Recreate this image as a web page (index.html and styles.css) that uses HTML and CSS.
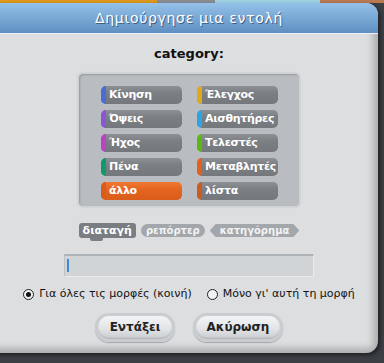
FILE: index.html
```html
<!DOCTYPE html>
<html lang="el">
<head>
    <meta charset="UTF-8">
    <meta name="viewport" content="width=device-width, initial-scale=1.0">
    <title>Δημιούργησε μια εντολή</title>
    <link rel="stylesheet" href="styles.css">
</head>
<body>
    <div class="dialog">
        <div class="title-bar">Δημιούργησε μια εντολή</div>
        <div class="dialog-body">
            <div class="label">category:</div>
            <div class="palette">
                <div class="cat"><span class="cap motion"></span>Κίνηση</div>
                <div class="cat"><span class="cap control"></span>Έλεγχος</div>
                <div class="cat"><span class="cap looks"></span>Όψεις</div>
                <div class="cat"><span class="cap sensing"></span>Αισθητήρες</div>
                <div class="cat"><span class="cap sound"></span>Ήχος</div>
                <div class="cat"><span class="cap operators"></span>Τελεστές</div>
                <div class="cat"><span class="cap pen"></span>Πένα</div>
                <div class="cat"><span class="cap variables"></span>Μεταβλητές</div>
                <div class="cat selected"><span class="cap other"></span>άλλο</div>
                <div class="cat"><span class="cap lists"></span>λίστα</div>
            </div>
            <div class="shapes">
                <div class="shape command">διαταγή</div>
                <div class="shape reporter">ρεπόρτερ</div>
                <div class="shape predicate">κατηγόρημα</div>
            </div>
            <div class="name-field"><span class="caret"></span></div>
            <div class="radios">
                <label class="radio"><span class="dot checked"></span>Για όλες τις μορφές (κοινή)</label>
                <label class="radio"><span class="dot"></span>Μόνο γι' αυτή τη μορφή</label>
            </div>
            <div class="buttons">
                <div class="btn ok">Εντάξει</div>
                <div class="btn cancel">Ακύρωση</div>
            </div>
        </div>
    </div>
</body>
</html>
```

FILE: styles.css
```css
body {
    margin: 0;
    padding-top: 3px;
    height: 360px;
    overflow: hidden;
    font-family: 'DejaVu Sans', sans-serif;
    background:
        linear-gradient(to right, #e09a1c 0 157px, #8a8d92 157px 215px, #9fd4e4 215px 320px, #b97a52 320px) top / 100% 3px no-repeat,
        #3c3f44;
}
.dialog {
    margin-left: -12px;
    width: 390px;
    height: 350px;
    border-radius: 12px;
    overflow: hidden;
    background-color: #dcdee0;
    box-shadow: 2px 2px 4px rgba(0,0,0,0.5);
}
.title-bar {
    height: 31px;
    line-height: 30px;
    padding-left: 12px;
    text-align: center;
    color: white;
    font-size: 14px;
    letter-spacing: 0.7px;
    text-shadow: 1px 1px 0 #3d5f86;
    background: linear-gradient(to bottom, #93c1e9, #5f8fc2);
    border-bottom: 1px solid #eef0f2;
    box-sizing: border-box;
}
.dialog-body {
    height: 319px;
    padding: 12px 0 0 12px;
    box-sizing: border-box;
    box-shadow: inset -7px -7px 7px -2px rgba(0,0,0,0.22);
    display: flex;
    flex-direction: column;
    align-items: center;
}
.label {
    font-size: 13px;
    font-weight: bold;
    line-height: 16px;
    color: #111;
}
.palette {
    margin-top: 11px;
    width: 222px;
    height: 134px;
    box-sizing: border-box;
    padding: 12px 22px 0 22px;
    background-color: #b9bdc1;
    border: 1px solid #cfd2d5;
    border-radius: 5px;
    box-shadow: inset 1px 1px 2px rgba(0,0,0,0.2), 0 0 2px rgba(0,0,0,0.15);
    display: grid;
    grid-template-columns: repeat(2, 81px);
    grid-auto-rows: 18px;
    column-gap: 15px;
    row-gap: 6px;
}
.cat {
    position: relative;
    background: linear-gradient(to bottom, #8c8f94, #7b7e83 40%, #74777c);
    border-radius: 5px;
    color: white;
    font-size: 11px;
    font-weight: bold;
    letter-spacing: -0.3px;
    line-height: 18px;
    padding-left: 8px;
    white-space: nowrap;
}
.cat.selected {
    background: linear-gradient(to bottom, #f07a32, #e4651f 40%, #d95c1a);
}
.cap {
    position: absolute;
    left: 0;
    top: 0;
    bottom: 0;
    width: 5px;
    border-radius: 5px 0 0 5px;
}
.motion { background-color: #4a6cd4; }
.looks { background-color: #8a55d7; }
.sound { background-color: #bb42c3; }
.pen { background-color: #0e9a6c; }
.other { background-color: #d95c1a; }
.control { background-color: #e1a91a; }
.sensing { background-color: #2ca5e2; }
.operators { background-color: #5cb712; }
.variables { background-color: #e3601e; }
.lists { background-color: #cc5b22; }

.shapes {
    margin-top: 16px;
    height: 17px;
    display: flex;
    gap: 5px;
    align-items: flex-start;
}
.shape {
    font-size: 10px;
    font-weight: bold;
    line-height: 13px;
    height: 13px;
    white-space: nowrap;
}
.command {
    position: relative;
    padding: 0 4px;
    color: white;
    background-color: #7a7d82;
    border-radius: 3px;
    height: 15px;
    line-height: 15px;
    font-size: 11px;
}
.command::after {
    content: "";
    position: absolute;
    left: 11px;
    bottom: -3px;
    width: 13px;
    height: 3px;
    background-color: #7a7d82;
    border-radius: 0 0 2px 2px;
}
.reporter {
    padding: 0 5px;
    color: #f2f3f4;
    background-color: #a3a6aa;
    border-radius: 7px;
    margin-top: 1px;
}
.predicate {
    padding: 0 10px;
    color: #f2f3f4;
    background-color: #a3a6aa;
    margin-top: 1px;
    clip-path: polygon(6px 0, calc(100% - 6px) 0, 100% 50%, calc(100% - 6px) 100%, 6px 100%, 0 50%);
}
.name-field {
    margin-top: 14px;
    width: 250px;
    height: 23px;
    box-sizing: border-box;
    background-color: #d1d4d7;
    border-top: 2px solid #aeb3b8;
    border-left: 1px solid #bfc3c7;
    border-right: 1px solid #e8eaec;
    border-bottom: 1px solid #e8eaec;
    padding: 3px 0 0 2px;
}
.caret {
    display: block;
    width: 2px;
    height: 13px;
    background-color: #3d8ad6;
}
.radios {
    margin-top: 9px;
    display: flex;
    gap: 15px;
    font-size: 11px;
    line-height: 16px;
    color: #111;
}
.radio {
    display: flex;
    align-items: center;
    gap: 5px;
}
.dot {
    width: 11px;
    height: 11px;
    box-sizing: border-box;
    border: 1px solid #222;
    border-radius: 50%;
    background-color: #f2f3f4;
    display: flex;
    align-items: center;
    justify-content: center;
}
.dot.checked::before {
    content: "";
    width: 5px;
    height: 5px;
    border-radius: 50%;
    background-color: #111;
}
.buttons {
    margin-top: 11px;
    display: flex;
    gap: 18px;
}
.btn {
    height: 29px;
    box-sizing: border-box;
    border-radius: 14px;
    border: 3px solid #c9ccd0;
    background: linear-gradient(to bottom, #f4f5f6, #e2e4e6 55%, #c9ccd0);
    box-shadow: 0 1px 1px rgba(0,0,0,0.25), inset 0 -1px 2px rgba(0,0,0,0.15);
    font-size: 12px;
    font-weight: bold;
    line-height: 23px;
    text-align: center;
    color: #222;
}
.ok { width: 80px; }
.cancel { width: 90px; }
```
